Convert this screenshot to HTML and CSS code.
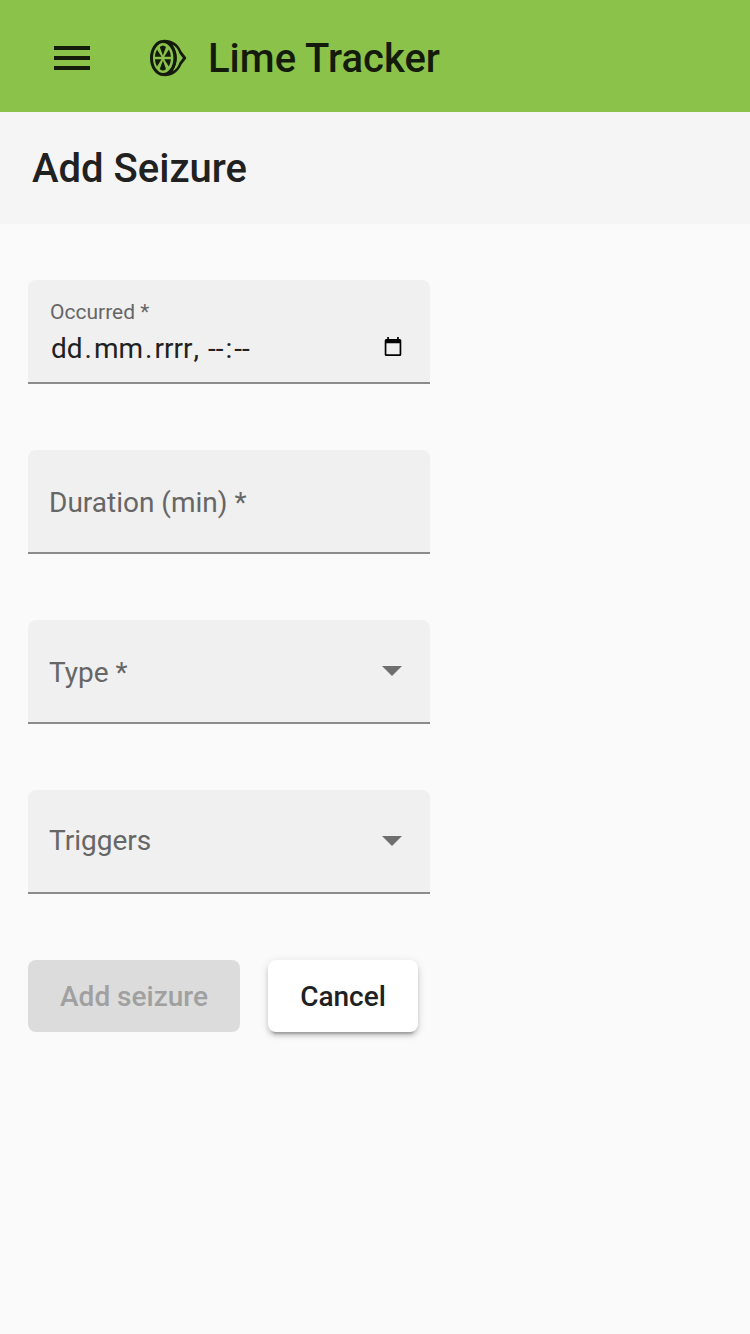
FILE: index.html
```html
<!DOCTYPE html>
<html lang="en">
<head>
<meta charset="utf-8">
<title>Lime Tracker</title>
<link rel="stylesheet" href="styles.css">
</head>
<body>
<header class="toolbar">
  <svg class="menu" viewBox="0 0 36 24"><path d="M0 0h36v4H0zM0 10h36v4H0zM0 20h36v4H0z"/></svg>
  <svg class="lime" viewBox="0 0 37 38">
    <ellipse cx="13.200" cy="19" rx="11.700" ry="16.600" fill="none" stroke="currentColor" stroke-width="3"/>
    <path fill-rule="evenodd" d="M13 .9C22 .5 28 4.500 31.500 12.500L36 18.200Q36.500 19 36 19.800L31.500 25.500C28 33.500 22 37.500 13 37.100C20 35 25.500 29 25.500 19S20 3 13 .9zM22.500 5.800C28.400 14 28.400 24 22.500 32.200C26 30.500 28.200 27.500 29.300 23.700L32.800 19L29.300 14.300C28.200 10.500 26 7.500 22.500 5.800z"/>
    <path d="M9.800 8Q12.900 5 16 8L12.900 16.400zM7 10.500L11.600 17.800H4.900Q5.200 13.500 7 10.500zM18.800 10.500L14.200 17.800H20.900Q20.600 13.500 18.800 10.500zM9.800 30Q12.900 33 16 30L12.900 21.600zM7 27.500L11.600 20.200H4.900Q5.200 24.500 7 27.500zM18.800 27.500L14.200 20.200H20.900Q20.600 24.500 18.800 27.500z"/>
  </svg>
  <span class="brand">Lime Tracker</span>
</header>
<div class="titlebar"><h1 class="title">Add Seizure</h1></div>
<form class="form">
  <div class="field dated">
    <div class="stack"><label class="small">Occurred *</label><div class="date"><span>dd</span><span class="dot">.</span><span>mm</span><span class="dot">.</span><span>rrrr</span><span class="comma">,</span><span class="time">--</span><span class="colon">:</span><span>--</span></div></div>
    <svg class="calendar" viewBox="0 0 18 20"><path fill-rule="evenodd" d="M3.200 0h1.700v2h8.200V0h1.700v2h1q1.500 0 1.500 1.500V17.500q0 1.500-1.500 1.500H2.200q-1.500 0-1.500-1.500V3.500Q.7 2 2.200 2h1zM2.400 6.300v11h13.200v-11z"/></svg>
  </div>
  <div class="field"><label class="label">Duration (min) *</label></div>
  <div class="field"><label class="label">Type *</label><span class="arrow"></span></div>
  <div class="field"><label class="label triggers">Triggers</label><span class="arrow"></span></div>
  <div class="actions"><button class="btn add" type="button" disabled>Add seizure</button><button class="btn cancel" type="button">Cancel</button></div>
</form>
</body>
</html>
```
FILE: styles.css
```css
* { box-sizing: border-box; }
body { margin: 0; min-height: 1334px; background: #fafafa; color: #212121; font-family: Roboto, sans-serif; }
.toolbar { height: 112px; background: #8bc34a; display: flex; align-items: center; padding: 4px 0 0 54px; color: #141b0b; }
.menu { width: 36px; height: 24px; fill: currentColor; }
.lime { width: 37px; height: 38px; margin-left: 60px; fill: currentColor; }
.brand { font-size: 40px; font-weight: 500; margin-left: 21px; white-space: nowrap; }
.titlebar { height: 112px; background: #f5f5f5; display: flex; align-items: center; padding-left: 32px; }
.title { margin: 0; font-size: 40px; font-weight: 500; }
.form { padding: 56px 28px; display: flex; flex-direction: column; }
.field { width: 402px; height: 104px; margin-bottom: 66px; background: #f0f0f0; border-bottom: 2px solid #8b8b8b; border-radius: 8px 8px 0 0; display: flex; justify-content: space-between; align-items: center; padding: 0 28px 0 21px; }
.dated { padding: 2px 28px 0 22px; }
.label { font-size: 28px; color: #666; padding-top: 2px; }
.triggers { padding: 0 0 2px; }
.small { display: block; font-size: 21px; line-height: 24px; color: #666; }
.date { display: flex; font-size: 28px; line-height: 32px; margin-top: 9px; padding-left: 1px; }
.dot { padding: 0 2px; }
.comma { margin-left: 1px; }
.time { margin-left: 9px; }
.colon { padding: 0 2px; }
.calendar { width: 18px; height: 20px; margin-top: 30px; }
.arrow { border: 10px solid transparent; border-top-color: #6f6f6f; border-bottom: 0; }
.actions { display: flex; gap: 28px; }
.btn { height: 72px; border: 0; border-radius: 8px; font: 500 28px Roboto, sans-serif; padding: 0; }
.add { width: 212px; background: #dcdcdc; color: #a0a0a0; }
.cancel { width: 150px; background: #fff; color: #212121; box-shadow: 0 6px 2px -4px rgba(0,0,0,.2), 0 4px 4px rgba(0,0,0,.14), 0 2px 10px rgba(0,0,0,.12); }
```
